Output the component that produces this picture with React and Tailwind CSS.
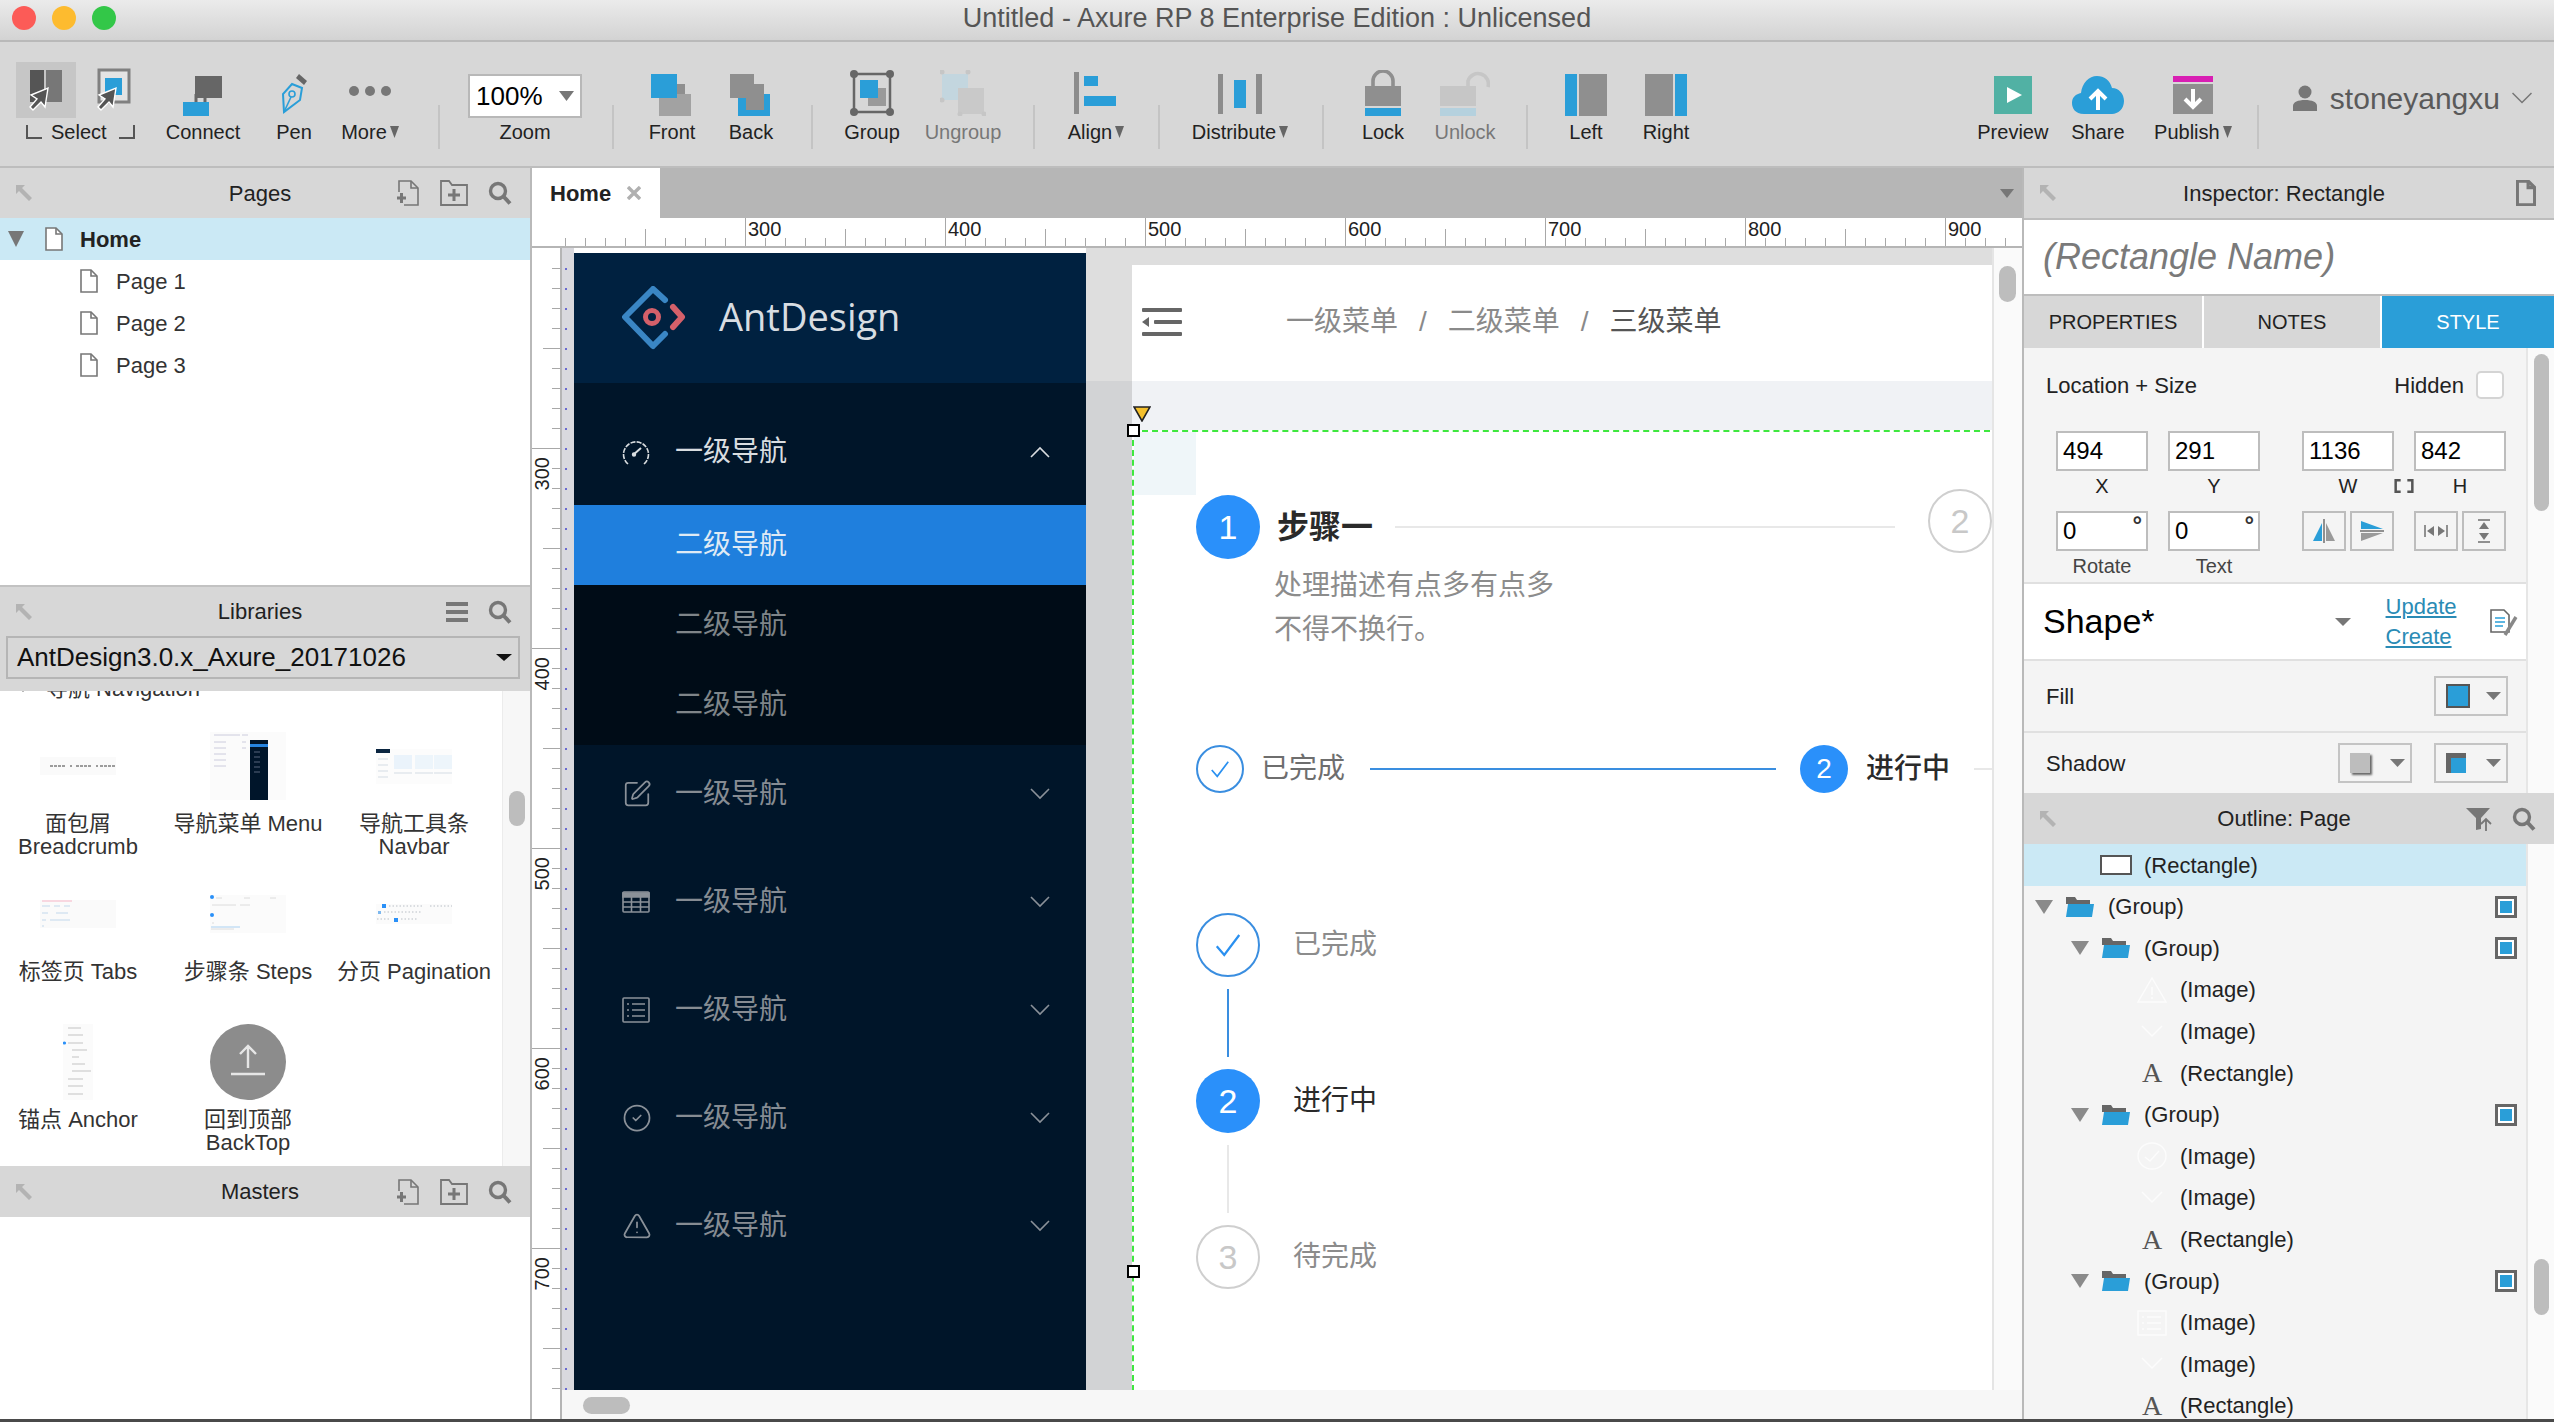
import { SquarePen, CircleCheck, TriangleAlert } from "lucide-react";

const BLUE = "#2a9ed8";

// ---- small drawn icons ----

function Tri({ w = 16, h = 10, color = "#777", className = "" }) {
  return (
    <svg width={w} height={h} viewBox="0 0 16 10" preserveAspectRatio="none" className={className}>
      <path d="M0 0H16L8 10Z" fill={color} />
    </svg>
  );
}

function Chevron({ up, color = "#8a9199" }) {
  return (
    <svg width="20" height="12" viewBox="0 0 20 12" fill="none" stroke={color} strokeWidth="1.6">
      <path d={up ? "M1 11L10 2L19 11" : "M1 1L10 10L19 1"} />
    </svg>
  );
}

function CollapseArrow() {
  return (
    <svg width="18" height="16" viewBox="0 0 18 16" fill="#b3b3b3">
      <path d="M1 0H10L7 3L17 13L14 16L4 6L1 9Z" />
    </svg>
  );
}

function Search({ size = 24 }) {
  return (
    <svg width={size} height={size} viewBox="0 0 24 24" fill="none" stroke="#777">
      <circle cx="10" cy="10" r="7.5" strokeWidth="3.4" />
      <path d="M15.5 15.5L22 22.5" strokeWidth="4" />
    </svg>
  );
}

function Doc({ w = 18, h = 24, color = "#777", fill = "#fff", sw = 1.6 }) {
  return (
    <svg width={w} height={h} viewBox="0 0 18 24" fill={fill} stroke={color} strokeWidth={sw}>
      <path d="M1 1H11L17 7V23H1Z" />
      <path d="M11 1V7H17" fill="none" />
    </svg>
  );
}

function AddPage() {
  return (
    <svg width="24" height="26" viewBox="0 0 24 26" fill="none" stroke="#777" strokeWidth="1.6">
      <path d="M3 12V1H15L22 8V25H8" />
      <path d="M15 1V8H22" />
      <path d="M1 18H10M5.5 13V23" strokeWidth="3" />
    </svg>
  );
}

function AddFolder() {
  return (
    <svg width="28" height="26" viewBox="0 0 28 26" fill="none" stroke="#777" strokeWidth="1.8">
      <path d="M1 25V1H9L12 5H27V25Z" />
      <path d="M8 15H20M14 9V21" strokeWidth="3" />
    </svg>
  );
}

function Cursor({ x, y }) {
  return (
    <path
      transform={`translate(${x} ${y})`}
      d="M20 0L17 19L13 14L5 22L2 19L9 11L3 7Z"
      fill="#555"
      stroke="#fff"
      strokeWidth="1.4"
    />
  );
}

function SelectIconA() {
  return (
    <svg width="36" height="44" viewBox="0 0 36 44">
      <rect x="2" y="2" width="14" height="32" fill="#555" />
      <rect x="18" y="2" width="16" height="32" fill="#777" />
      <Cursor x="0" y="20" />
    </svg>
  );
}

function SelectIconB() {
  return (
    <svg width="36" height="44" viewBox="0 0 36 44">
      <rect x="3" y="2" width="30" height="32" fill="#e4e4e4" stroke="#808080" strokeWidth="3" />
      <rect x="9" y="10" width="17" height="17" fill={BLUE} />
      <Cursor x="0" y="20" />
    </svg>
  );
}

const ICONS = {
  connect: (
    <svg width="40" height="46" viewBox="0 0 40 46">
      <rect x="12" y="6" width="27" height="22" fill="#666" />
      <path d="M22 28V34H13V24" fill="none" stroke="#666" strokeWidth="3" />
      <rect x="0" y="30" width="26" height="16" fill={BLUE} transform="translate(0 -6)" opacity="0" />
      <rect x="0" y="32" width="26" height="14" fill={BLUE} />
    </svg>
  ),
  pen: (
    <svg width="30" height="46" viewBox="0 0 30 46" fill="none">
      <path d="M20 4L28 11L25 15L17 8Z" fill="#666" />
      <path d="M13 14L23 18L21 30L5 42L4 24Z" stroke={BLUE} strokeWidth="2" fill="none" />
      <circle cx="13" cy="24" r="3" stroke={BLUE} strokeWidth="1.6" />
      <path d="M5 42L12 27" stroke={BLUE} strokeWidth="1.6" />
    </svg>
  ),
  more: (
    <svg width="42" height="46" viewBox="0 0 42 46" fill="#777">
      <ellipse cx="5" cy="21" rx="5" ry="5" />
      <ellipse cx="21" cy="21" rx="5" ry="5" />
      <ellipse cx="37" cy="21" rx="5" ry="5" />
    </svg>
  ),
  front: (
    <svg width="42" height="46" viewBox="0 0 42 46">
      <path d="M18 20H34V34H26V46H8V36H18Z" fill="#9a9a9a" />
      <rect x="16" y="14" width="18" height="26" fill="#8f8f8f" />
      <rect x="8" y="24" width="32" height="22" fill="#a2a2a2" />
      <rect x="0" y="4" width="26" height="24" fill={BLUE} />
    </svg>
  ),
  back: (
    <svg width="42" height="46" viewBox="0 0 42 46">
      <rect x="8" y="24" width="32" height="22" fill={BLUE} />
      <rect x="16" y="14" width="18" height="26" fill="#8f8f8f" />
      <rect x="0" y="4" width="24" height="24" fill="#8f8f8f" />
    </svg>
  ),
  group: (
    <svg width="44" height="46" viewBox="0 0 44 46">
      <rect x="4" y="4" width="36" height="38" fill="none" stroke="#666" strokeWidth="2.5" />
      <ellipse cx="4" cy="4" rx="4" ry="4" fill="#666" />
      <ellipse cx="40" cy="4" rx="4" ry="4" fill="#666" />
      <ellipse cx="4" cy="42" rx="4" ry="4" fill="#666" />
      <ellipse cx="40" cy="42" rx="4" ry="4" fill="#666" />
      <rect x="18" y="18" width="18" height="18" fill="#9a9a9a" />
      <rect x="10" y="10" width="18" height="18" fill={BLUE} />
    </svg>
  ),
  ungroup: (
    <svg width="46" height="46" viewBox="0 0 46 46">
      <rect x="2" y="4" width="26" height="26" fill="#c3d6df" />
      <rect x="18" y="18" width="26" height="26" fill="#c9c9c9" />
      <g fill="#c6c6c6">
        <circle cx="2" cy="2" r="2.5" />
        <circle cx="28" cy="2" r="2.5" />
        <circle cx="2" cy="30" r="2.5" />
        <circle cx="44" cy="44" r="2.5" />
        <circle cx="20" cy="44" r="2.5" />
      </g>
    </svg>
  ),
  align: (
    <svg width="44" height="46" viewBox="0 0 44 46">
      <rect x="0" y="2" width="5" height="42" fill="#8c8c8c" />
      <rect x="10" y="6" width="14" height="10" fill={BLUE} />
      <rect x="10" y="26" width="32" height="10" fill={BLUE} />
    </svg>
  ),
  distribute: (
    <svg width="44" height="46" viewBox="0 0 44 46">
      <rect x="0" y="4" width="5" height="40" fill="#8c8c8c" />
      <rect x="16" y="10" width="12" height="28" fill={BLUE} />
      <rect x="38" y="4" width="6" height="40" fill="#8c8c8c" />
    </svg>
  ),
  lock: (
    <svg width="36" height="46" viewBox="0 0 36 46">
      <path d="M8 18V11A10 10 0 0 1 28 11V18" fill="none" stroke="#8f8f8f" strokeWidth="3.6" />
      <rect x="0" y="16" width="36" height="20" fill="#8f8f8f" />
      <rect x="0" y="38" width="36" height="8" fill={BLUE} />
    </svg>
  ),
  unlock: (
    <svg width="50" height="46" viewBox="0 0 50 46">
      <path d="M28 18V11A10 10 0 0 1 48 17" fill="none" stroke="#c6c6c6" strokeWidth="3.6" />
      <rect x="0" y="16" width="36" height="20" fill="#c6c6c6" />
      <rect x="0" y="38" width="36" height="8" fill="#b5d1de" />
    </svg>
  ),
  left: (
    <svg width="42" height="46" viewBox="0 0 42 46">
      <rect x="0" y="4" width="12" height="42" fill={BLUE} />
      <rect x="14" y="4" width="28" height="42" fill="#8f8f8f" />
    </svg>
  ),
  right: (
    <svg width="42" height="46" viewBox="0 0 42 46">
      <rect x="0" y="4" width="28" height="42" fill="#8f8f8f" />
      <rect x="30" y="4" width="12" height="42" fill={BLUE} />
    </svg>
  ),
  preview: (
    <svg width="40" height="46" viewBox="0 0 40 46">
      <rect x="1" y="6" width="38" height="38" fill="#51b1a4" />
      <path d="M14 17L29 25L14 33Z" fill="#fff" />
    </svg>
  ),
  share: (
    <svg width="54" height="46" viewBox="0 0 54 46">
      <path
        d="M13 44C4 44 1 38 1 33C1 27 5 24 10 23C11 13 18 6 26 6C33 6 39 10 41 18C48 18 53 24 53 31C53 39 47 44 41 44Z"
        fill={BLUE}
      />
      <path d="M27 40V22M19 29L27 21L35 29" fill="none" stroke="#fff" strokeWidth="4" />
    </svg>
  ),
  publish: (
    <svg width="40" height="46" viewBox="0 0 40 46">
      <rect x="0" y="6" width="40" height="6" fill="#d81fb3" />
      <rect x="0" y="14" width="40" height="30" fill="#8f8f8f" />
      <path d="M20 19V37M12 29L20 37L28 29" fill="none" stroke="#fff" strokeWidth="4" />
    </svg>
  ),
};

// ---- toolbar ----

const LEFT_TOOLS = [
  { icon: "connect", label: "Connect", w: "w-[126px]" },
  { icon: "pen", label: "Pen", w: "w-[56px]" },
  { icon: "more", label: "More", w: "w-[96px]", drop: true },
  { divider: "ml-[20px]" },
  { zoom: true },
  { divider: "ml-[2px]" },
  { icon: "front", label: "Front", w: "w-[116px]" },
  { icon: "back", label: "Back", w: "w-[42px]" },
  { divider: "ml-[39px]" },
  { icon: "group", label: "Group", w: "w-[118px]" },
  { icon: "ungroup", label: "Ungroup", w: "w-[64px]", muted: true },
  { divider: "ml-[38px]" },
  { icon: "align", label: "Align", w: "w-[122px]", drop: true },
  { divider: "ml-[1px]" },
  { icon: "distribute", label: "Distribute", w: "w-[160px]", drop: true },
  { divider: "ml-[2px]" },
  { icon: "lock", label: "Lock", w: "w-[118px]" },
  { icon: "unlock", label: "Unlock", w: "w-[46px]", muted: true },
  { divider: "ml-[38px]" },
  { icon: "left", label: "Left", w: "w-[116px]" },
  { icon: "right", label: "Right", w: "w-[44px]" },
];

function Divider({ className }) {
  return <div className={`w-[2px] h-[44px] mt-[35px] bg-[#c4c4c4] shrink-0 ${className}`} />;
}

function Tool({ tool }) {
  return (
    <div className={`${tool.w} shrink-0 flex flex-col items-center`}>
      <div className="h-[46px] flex items-start justify-center">{ICONS[tool.icon]}</div>
      <div
        className={`h-[24px] mt-[4px] flex items-center gap-[3px] text-[20px] whitespace-nowrap ${
          tool.muted ? "text-[#777]" : "text-[#222]"
        }`}
      >
        {tool.label}
        {tool.drop && <Tri w={9} h={12} color="#666" />}
      </div>
    </div>
  );
}

function Toolbar() {
  return (
    <div className="h-[124px] bg-[#d7d7d7] flex items-start pt-[28px] pl-[16px] shrink-0">
      <div className="w-[124px] shrink-0 flex flex-col">
        <div className="flex items-center -mt-[8px]">
          <div className="w-[60px] h-[56px] bg-[#c6c6c6] flex items-center justify-center">
            <SelectIconA />
          </div>
          <div className="ml-[20px]">
            <SelectIconB />
          </div>
        </div>
        <div className="h-[24px] mt-[2px] flex items-center text-[20px] text-[#222] whitespace-nowrap pl-[10px]">
          <div className="w-[16px] h-[14px] border-l-2 border-b-2 border-[#555] mr-[9px]" />
          Select
          <div className="w-[16px] h-[14px] border-r-2 border-b-2 border-[#555] ml-[12px]" />
        </div>
      </div>
      {LEFT_TOOLS.map((t, i) => {
        if (t.divider) return <Divider key={i} className={`-mt-[-7px] ${t.divider}`} />;
        if (t.zoom)
          return (
            <div key={i} className="w-[170px] shrink-0 flex flex-col items-center">
              <div className="w-[114px] h-[44px] mt-[4px] -mb-[2px] bg-white border-2 border-[#b8b8b8] flex items-center justify-between pl-[6px] pr-[6px] text-[26px] text-black">
                100%
                <Tri w={15} h={10} color="#777" />
              </div>
              <div className="h-[24px] mt-[4px] flex items-center text-[20px] text-[#222]">Zoom</div>
            </div>
          );
        return <Tool key={i} tool={t} />;
      })}
      <div className="flex-1" />
      <Tool tool={{ icon: "preview", label: "Preview", w: "w-[80px]" }} />
      <Tool tool={{ icon: "share", label: "Share", w: "w-[90px]" }} />
      <Tool tool={{ icon: "publish", label: "Publish", w: "w-[100px]", drop: true }} />
      <Divider className="ml-[14px]" />
      <div className="flex items-center ml-[34px] h-[48px] pt-[8px] mr-[22px]">
        <svg width="24" height="26" viewBox="0 0 24 26" fill="#777">
          <circle cx="12" cy="7" r="6.5" />
          <path d="M0 26V21C0 17 5 15 12 15C19 15 24 17 24 21V26Z" />
        </svg>
        <span className="text-[30px] text-[#5a5a5a] ml-[13px] mr-[12px]">stoneyangxu</span>
        <svg width="20" height="12" viewBox="0 0 20 12" fill="none" stroke="#777" strokeWidth="1.5">
          <path d="M0.5 1L10 10.5L19.5 1" />
        </svg>
      </div>
    </div>
  );
}

// ---- shared panel pieces ----

function PanelHeader({ title, children, className = "h-[50px]" }) {
  return (
    <div className={`bg-[#d7d7d7] grid grid-cols-[130px_1fr_140px] items-center shrink-0 ${className}`}>
      <div className="pl-[15px] flex">
        <CollapseArrow />
      </div>
      <div className="text-center text-[22px] text-[#222]">{title}</div>
      <div className="flex items-center justify-end gap-[20px] pr-[18px]">{children}</div>
    </div>
  );
}

function PageRow({ label }) {
  return (
    <div className="h-[42px] flex items-center pl-[80px] text-[22px] text-[#333]">
      <Doc />
      <span className="ml-[18px]">{label}</span>
    </div>
  );
}

// little library previews, drawn as pictures
const THUMBS = {
  breadcrumb: (
    <svg width="76" height="18" viewBox="0 0 76 18">
      <rect width="76" height="18" fill="#fafafa" />
      <path d="M10 9H26M30 9H32M36 9H52M56 9H58M60 9H76" stroke="#9c9c9c" strokeWidth="2" strokeDasharray="3 1" />
    </svg>
  ),
  menu: (
    <svg width="76" height="68" viewBox="0 0 76 68">
      <rect width="76" height="68" fill="#fbfbfb" />
      <rect x="40" y="8" width="18" height="60" fill="#00152a" />
      <rect x="40" y="12" width="18" height="3" fill="#2684e0" />
      <path d="M4 3H30M4 10H16M4 16H16M4 22H16M4 28H16M4 34H16M32 3H38M32 10H36M32 16H36" stroke="#ccd" strokeWidth="1" />
      <path d="M44 20H50M44 25H50M44 30H50M44 35H50M44 40H50" stroke="#56657a" strokeWidth="1" />
    </svg>
  ),
  navbar: (
    <svg width="76" height="35" viewBox="0 0 76 35">
      <rect width="76" height="35" fill="#fcfcfc" />
      <rect width="14" height="4" fill="#0a2540" />
      <rect x="18" y="6" width="18" height="14" fill="#eaf3fb" />
      <rect x="39" y="6" width="18" height="14" fill="#edf5fb" />
      <rect x="58" y="6" width="18" height="14" fill="#edf5fb" />
      <path d="M2 10H12M2 16H12M2 22H12M2 28H12M18 24H36M39 24H57M58 24H76" stroke="#d4dce4" strokeWidth="1" />
    </svg>
  ),
  tabs: (
    <svg width="76" height="28" viewBox="0 0 76 28">
      <rect width="76" height="28" fill="#fafafa" />
      <path d="M2 1H32" stroke="#f6c8d4" strokeWidth="1.4" />
      <path d="M2 6H10M14 6H20M24 6H30M2 13H8M16 13H28M2 20H6M10 20H30M2 26H4" stroke="#d5e3f1" strokeWidth="1.4" />
    </svg>
  ),
  steps: (
    <svg width="76" height="38" viewBox="0 0 76 38">
      <rect width="76" height="38" fill="#fbfbfb" />
      <circle cx="2" cy="2" r="2" fill="#2a90f8" />
      <circle cx="2" cy="20" r="2" fill="#2a90f8" />
      <path d="M6 3H12M34 3H40M60 3H66M2 10H26M30 10H40M2 28H4M1 34H24" stroke="#dcdcdc" strokeWidth="1" />
      <path d="M1 32H30" stroke="#a9d0f1" strokeWidth="1" />
    </svg>
  ),
  pagination: (
    <svg width="76" height="20" viewBox="0 0 76 20">
      <rect width="76" height="20" fill="#fbfbfb" />
      <rect x="6" y="0" width="4" height="4" fill="#2a90f8" />
      <rect x="2" y="7" width="3" height="3" fill="#7db8ef" />
      <rect x="18" y="14" width="4" height="4" fill="#2a90f8" />
      <path d="M13 2H48M54 2H76M8 8H46M1 15H14M25 15H42" stroke="#b9bfc6" strokeWidth="1" strokeDasharray="1.5 2" />
    </svg>
  ),
  anchor: (
    <svg width="30" height="76" viewBox="0 0 30 76">
      <rect width="30" height="76" fill="#fbfbfb" />
      <circle cx="1.5" cy="19" r="1.6" fill="#2a90f8" />
      <path d="M5 4H18M5 11H20M5 19H20M9 26H24M9 33H16M9 40H22M9 47H28M5 55H20M5 62H20M5 70H20" stroke="#c4c4c4" strokeWidth="1.2" />
    </svg>
  ),
  backtop: (
    <svg width="76" height="76" viewBox="0 0 76 76">
      <circle cx="38" cy="38" r="38" fill="#8c8c8c" />
      <path d="M38 44V22M30 30L38 22L46 30M21 50H55" fill="none" stroke="#e6e6e6" strokeWidth="2.4" />
    </svg>
  ),
};

const LIBRARY = [
  { thumb: "breadcrumb", lines: ["面包屑", "Breadcrumb"] },
  { thumb: "menu", lines: ["导航菜单 Menu"] },
  { thumb: "navbar", lines: ["导航工具条", "Navbar"] },
  { thumb: "tabs", lines: ["标签页 Tabs"] },
  { thumb: "steps", lines: ["步骤条 Steps"] },
  { thumb: "pagination", lines: ["分页 Pagination"] },
  { thumb: "anchor", lines: ["锚点 Anchor"] },
  { thumb: "backtop", lines: ["回到顶部", "BackTop"] },
];

function LeftPanel() {
  return (
    <div className="w-[532px] shrink-0 border-r-2 border-[#b9b9b9] flex flex-col bg-white">
      <PanelHeader title="Pages">
        <div className="flex items-center gap-[20px] mr-[0px]">
          <AddPage />
          <AddFolder />
          <Search />
        </div>
      </PanelHeader>
      <div className="h-[367px] shrink-0">
        <div className="h-[42px] bg-[#cbe9f5] flex items-center pl-[8px] text-[22px] font-bold text-[#222]">
          <Tri w={16} h={16} color="#777" />
          <span className="ml-[21px] flex">
            <Doc />
          </span>
          <span className="ml-[17px]">Home</span>
        </div>
        <PageRow label="Page 1" />
        <PageRow label="Page 2" />
        <PageRow label="Page 3" />
      </div>
      <div className="h-[2px] bg-[#c2c2c2] shrink-0" />
      <div className="h-[104px] bg-[#d7d7d7] shrink-0 flex flex-col">
        <PanelHeader title="Libraries" className="h-[49px]">
          <div className="flex items-center gap-[20px]">
            <svg width="22" height="20" viewBox="0 0 22 20" fill="#777">
              <rect width="22" height="4" />
              <rect y="8" width="22" height="4" />
              <rect y="16" width="22" height="4" />
            </svg>
            <Search />
          </div>
        </PanelHeader>
        <div className="h-[43px] mx-[6px] w-[514px] border-2 border-[#b5b5b5] flex items-center justify-between pl-[9px] pr-[6px] text-[26px] text-[#111]">
          AntDesign3.0.x_Axure_20171026
          <Tri w={16} h={7} color="#111" />
        </div>
      </div>
      <div className="h-[475px] shrink-0 flex overflow-hidden">
        <div className="flex-1 overflow-hidden">
          <div className="h-[23px] -mt-[14px] flex items-center pl-[18px] text-[22px] text-[#333]">
            <Tri w={10} h={6} color="#555" />
            <span className="ml-[18px] whitespace-nowrap">导航 Navigation</span>
          </div>
          <div className="mt-[26px] grid grid-cols-[156px_184px_148px] gap-y-[16px] text-[22px] leading-[23px] text-[#333]">
            {LIBRARY.map((item) => (
              <div key={item.thumb} className="flex flex-col items-center">
                <div className="h-[80px] flex items-center justify-center">{THUMBS[item.thumb]}</div>
                <div className="mt-[6px] h-[46px] flex flex-col items-center whitespace-nowrap">
                  {item.lines.map((l) => (
                    <span key={l}>{l}</span>
                  ))}
                </div>
              </div>
            ))}
          </div>
        </div>
        <div className="w-[28px] bg-[#f7f7f7] border-l border-[#ececec] pt-[100px] pl-[6px] shrink-0">
          <div className="w-[16px] h-[35px] rounded-full bg-[#bdbdbd]" />
        </div>
      </div>
      <PanelHeader title="Masters" className="h-[51px]">
        <div className="flex items-center gap-[20px]">
          <AddPage />
          <AddFolder />
          <Search />
        </div>
      </PanelHeader>
    </div>
  );
}

// ---- canvas ----

function HorizontalRuler() {
  const ticks = Array.from({ length: 73 }, (_, i) => i);
  return (
    <div className="h-[30px] bg-white flex pl-[33px] border-b-2 border-[#b5b5b5] shrink-0 overflow-hidden">
      {ticks.map((i) => {
        const major = i % 10 === 9;
        const mid = i % 10 === 4;
        return (
          <div key={i} className="relative w-[20px] shrink-0 flex flex-col justify-end">
            <div className={`w-[1px] bg-[#a8a8a8] ${major ? "h-[29px]" : mid ? "h-[17px]" : "h-[8px]"}`} />
            {major && (
              <span className="absolute left-[3px] top-0 text-[20px] leading-[22px] text-[#222]">
                {300 + (i - 9) * 10}
              </span>
            )}
          </div>
        );
      })}
    </div>
  );
}

function VerticalRuler() {
  const ticks = Array.from({ length: 57 }, (_, i) => i);
  return (
    <div className="w-[30px] h-full bg-white border-r-2 border-[#b5b5b5] shrink-0 pt-[20px] overflow-hidden">
      {ticks.map((i) => {
        const major = i % 10 === 9;
        const mid = i % 10 === 4;
        return (
          <div key={i} className="relative h-[20px] flex justify-end">
            <div className={`h-[1px] bg-[#a8a8a8] ${major ? "w-[29px]" : mid ? "w-[17px]" : "w-[8px]"}`} />
            {major && (
              <span className="absolute left-[-1px] top-[9px] text-[20px] leading-[22px] text-[#222] [writing-mode:vertical-rl] rotate-180">
                {300 + (i - 9) * 10}
              </span>
            )}
          </div>
        );
      })}
    </div>
  );
}

function GuideStrip() {
  const dots = Array.from({ length: 57 }, (_, i) => i);
  return (
    <div className="w-[12px] h-full bg-[#d9d9de] shrink-0 pt-[20px] overflow-hidden">
      {dots.map((i) => (
        <div key={i} className="h-[20px]">
          <div className="w-[2px] h-[2px] ml-[3px] bg-[#6a6ad0]" />
        </div>
      ))}
    </div>
  );
}

function GaugeIcon({ color }) {
  return (
    <svg width="28" height="28" viewBox="0 0 28 28" fill="none" stroke={color} strokeWidth="1.6">
      <path d="M6 26A12.5 12.5 0 1 1 22 26" strokeDasharray="5 1.2" />
      <path d="M11 17L19 10" strokeWidth="2" />
      <circle cx="12" cy="16.5" r="1.4" fill={color} />
    </svg>
  );
}

function TableIcon({ color }) {
  return (
    <svg width="28" height="22" viewBox="0 0 28 22" fill="none" stroke={color} strokeWidth="1.6">
      <rect x="1" y="1" width="26" height="20" rx="1" />
      <path d="M1 2H27V6H1Z" fill={color} />
      <path d="M1 11H27M1 16H27M9.5 6V21M18.5 6V21" />
    </svg>
  );
}

function ListIcon({ color }) {
  return (
    <svg width="28" height="26" viewBox="0 0 28 26" fill="none" stroke={color} strokeWidth="1.6">
      <rect x="1" y="1" width="26" height="24" rx="1" />
      <path d="M10 7H23M10 13H23M10 19H23M5 7H7M5 13H7M5 19H7" />
    </svg>
  );
}

const NAV_MUTED = "#8a9199";

const NAV_ITEMS = [
  <SquarePen key="a" size={30} strokeWidth={1.4} color={NAV_MUTED} />,
  <TableIcon key="b" color={NAV_MUTED} />,
  <ListIcon key="c" color={NAV_MUTED} />,
  <CircleCheck key="d" size={30} strokeWidth={1.4} color={NAV_MUTED} />,
  <TriangleAlert key="e" size={30} strokeWidth={1.4} color={NAV_MUTED} />,
];

function Nav() {
  return (
    <div className="w-[512px] shrink-0 flex flex-col mt-[5px] h-[1137px] bg-[#001529]">
      <div className="h-[130px] bg-[#002140] flex items-center pl-[48px] shrink-0">
        <svg width="64" height="64" viewBox="0 0 64 64" fill="none" strokeWidth="6" strokeLinecap="round" strokeLinejoin="round">
          <path d="M43 14L31 3L3 31L31 60L43 48" stroke="#3a86c4" />
          <circle cx="30" cy="31" r="6.5" stroke="#d4606a" strokeWidth="5" />
          <path d="M51 21L60 31L51 41" stroke="#d4606a" />
        </svg>
        <span className="ml-[33px] text-[38px] font-medium text-[#d8dde2] [font-family:'Open_Sans',sans-serif] -mt-[4px]">
          AntDesign
        </span>
      </div>
      <div className="h-[122px] pt-[16px] flex items-center pl-[48px] pr-[36px] shrink-0">
        <span className="w-[53px] flex">
          <GaugeIcon color="#d9dde0" />
        </span>
        <span className="flex-1 text-[28px] text-[#d9dde0]">一级导航</span>
        <Chevron up color="#d9dde0" />
      </div>
      <div className="h-[80px] bg-[#1f7fdd] flex items-center pl-[101px] text-[28px] text-[#dfeaf5] shrink-0">二级导航</div>
      <div className="h-[80px] bg-[#000c17] flex items-center pl-[101px] text-[28px] text-[#7f8589] shrink-0">二级导航</div>
      <div className="h-[80px] bg-[#000c17] flex items-center pl-[101px] text-[28px] text-[#7f8589] shrink-0">二级导航</div>
      <div className="flex flex-col gap-[10px]">
        {NAV_ITEMS.map((icon, i) => (
          <div key={i} className="h-[98px] flex items-center pl-[48px] pr-[36px]">
            <span className="w-[53px] flex">{icon}</span>
            <span className="flex-1 text-[28px] text-[#868c93]">一级导航</span>
            <Chevron />
          </div>
        ))}
      </div>
    </div>
  );
}

function StepCircle({ n, state, size = "w-[64px] h-[64px]", text = "text-[34px]" }) {
  if (state === "done")
    return (
      <div className={`${size} shrink-0 rounded-full border-2 border-[#3a8ee0] flex items-center justify-center`}>
        <svg width="50%" height="50%" viewBox="0 0 24 24" fill="none" stroke="#2a90f0" strokeWidth="1.8">
          <path d="M3 13L9 20L21 4" />
        </svg>
      </div>
    );
  if (state === "active")
    return (
      <div className={`${size} shrink-0 rounded-full bg-[#2a90fa] text-white flex items-center justify-center ${text}`}>
        {n}
      </div>
    );
  return (
    <div className={`${size} shrink-0 rounded-full border-2 border-[#cfcfcf] text-[#c8c8c8] flex items-center justify-center ${text}`}>
      {n}
    </div>
  );
}

function Page() {
  return (
    <div className="w-[860px] shrink-0 flex flex-col h-[1143px]">
      <div className="h-[17px] bg-[#dedede] shrink-0" />
      <div className="h-[116px] bg-white flex items-center shrink-0 pl-[10px] pb-[2px]">
        <svg width="40" height="28" viewBox="0 0 40 28" fill="#666">
          <rect width="40" height="4" rx="1" />
          <rect x="12" y="12" width="28" height="4" rx="1" />
          <rect y="24" width="40" height="4" rx="1" />
          <path d="M0 14L7 9V19Z" />
        </svg>
        <div className="ml-[104px] flex items-center text-[28px] text-[#8a8a8a] whitespace-nowrap">
          一级菜单
          <span className="mx-[21px]">/</span>
          二级菜单
          <span className="mx-[21px]">/</span>
          <span className="text-[#555]">三级菜单</span>
        </div>
      </div>
      <div className="h-[49px] bg-[#f0f2f5] shrink-0" />
      <div className="relative flex-1 bg-white overflow-hidden pl-[64px] pt-[59px]">
        {/* selected rectangle's handles and outline lie over the page */}
        <div className="absolute left-[2px] top-[2px] w-[62px] h-[63px] bg-[#eff6f9]" />
        <div className="absolute left-0 right-[2px] top-0 border-t-2 border-dashed border-[#3fe83f]" />
        <div className="absolute left-0 top-0 bottom-0 border-l-2 border-dashed border-[#3fe83f]" />

        <div className="relative flex items-center">
          <StepCircle n="1" state="active" />
          <span className="ml-[17px] w-[129px] text-[32px] font-bold text-[#2a2a2a] whitespace-nowrap leading-none">步骤一</span>
          <div className="w-[500px] h-[2px] bg-[#e8e8e8] shrink-0" />
          <div className="ml-[33px] mb-[12px]">
            <StepCircle n="2" state="todo" />
          </div>
        </div>
        <div className="ml-[78px] -mt-[1px] text-[28px] leading-[44px] text-[#8c8c8c]">
          <div>处理描述有点多有点多</div>
          <div>不得不换行。</div>
        </div>

        <div className="mt-[93px] flex items-center">
          <StepCircle state="done" size="w-[48px] h-[48px]" />
          <span className="ml-[17px] w-[84px] text-[28px] text-[#6e6e6e] whitespace-nowrap">已完成</span>
          <div className="ml-[25px] w-[406px] h-[2px] bg-[#3a8ee0] shrink-0" />
          <div className="ml-[24px]">
            <StepCircle n="2" state="active" size="w-[48px] h-[48px]" text="text-[28px]" />
          </div>
          <span className="ml-[18px] w-[84px] text-[28px] font-medium text-[#2a2a2a] whitespace-nowrap">进行中</span>
          <div className="ml-[24px] w-[20px] h-[2px] bg-[#e8e8e8] shrink-0" />
        </div>

        <div className="mt-[120px] flex items-center">
          <StepCircle state="done" />
          <span className="ml-[33px] text-[28px] text-[#8c8c8c]">已完成</span>
        </div>
        <div className="ml-[31px] my-[12px] w-[2px] h-[68px] bg-[#3a8ee0]" />
        <div className="flex items-center">
          <StepCircle n="2" state="active" />
          <span className="ml-[33px] text-[28px] text-[#2a2a2a]">进行中</span>
        </div>
        <div className="ml-[31px] my-[12px] w-[2px] h-[68px] bg-[#e8e8e8]" />
        <div className="flex items-center">
          <StepCircle n="3" state="todo" />
          <span className="ml-[33px] text-[28px] text-[#8c8c8c]">待完成</span>
        </div>
      </div>
    </div>
  );
}

function Handle({ className }) {
  return <div className={`absolute w-[13px] h-[13px] bg-white border-2 border-black ${className}`} />;
}

function Canvas() {
  return (
    <div className="w-[1490px] shrink-0 flex flex-col">
      <div className="h-[50px] bg-[#b6b6b6] flex items-stretch shrink-0">
        <div className="w-[128px] bg-white flex items-center pl-[18px] text-[22px] font-bold text-[#222]">
          Home
          <svg width="14" height="14" viewBox="0 0 14 14" stroke="#b0b0b0" strokeWidth="3.4" className="ml-[16px]">
            <path d="M1 1L13 13M13 1L1 13" />
          </svg>
        </div>
        <div className="flex-1" />
        <div className="flex items-center pr-[8px]">
          <Tri w={14} h={9} color="#777" />
        </div>
      </div>
      <HorizontalRuler />
      <div className="relative flex-1 flex overflow-hidden">
        <VerticalRuler />
        <GuideStrip />
        <Nav />
        <div className="w-[46px] shrink-0 flex flex-col h-[1143px]">
          <div className="h-[133px] bg-[#dedede]" />
          <div className="flex-1 bg-[#d2d3d5]" />
        </div>
        <Page />
        <div className="w-[30px] shrink-0 h-[1143px] bg-[#fafafa] border-l-2 border-[#e5e5e5] pt-[18px] pl-[5px]">
          <div className="w-[17px] h-[36px] rounded-full bg-[#bdbdbd]" />
        </div>
        {/* over the canvas: handles, marker and bottom scroll bar */}
        <Handle className="left-[595px] top-[176px]" />
        <Handle className="left-[595px] top-[1017px]" />
        <svg width="18" height="16" viewBox="0 0 18 16" className="absolute left-[601px] top-[158px]">
          <path d="M1 1H17L9 15Z" fill="#f5c02c" stroke="#222" strokeWidth="1.6" />
        </svg>
        <div className="absolute left-[30px] right-0 bottom-0 h-[32px] bg-[#f7f7f7] pt-[7px] pl-[21px]">
          <div className="w-[47px] h-[17px] rounded-full bg-[#bdbdbd]" />
        </div>
      </div>
    </div>
  );
}

// ---- inspector ----

function Field({ value, deg, className = "" }) {
  return (
    <div className={`relative w-[92px] h-[40px] bg-white border-2 border-[#bdbdbd] flex items-center pl-[5px] text-[24px] text-black ${className}`}>
      {value}
      {deg && <span className="absolute right-[4px] top-[-6px] text-[24px] font-bold text-[#333]">°</span>}
    </div>
  );
}

function IconBtn({ children }) {
  return (
    <div className="w-[44px] h-[40px] border-2 border-[#bdbdbd] flex items-center justify-center">{children}</div>
  );
}

function DropBox({ children, className = "" }) {
  return (
    <div className={`w-[74px] h-[40px] border-2 border-[#c4c4c4] flex items-center justify-between pl-[10px] pr-[5px] ${className}`}>
      {children}
      <Tri w={15} h={8} color="#777" />
    </div>
  );
}

function StyleSection() {
  return (
    <div className="h-[445px] shrink-0 flex bg-[#f4f4f4] overflow-hidden">
      <div className="w-[502px] shrink-0 flex flex-col">
        <div className="h-[236px] shrink-0 pl-[32px] pt-[22px] border-b-2 border-[#e0e0e0]">
          <div className="flex items-center h-[30px] text-[22px] text-[#222] pr-[22px] pl-[-10px] -ml-[10px]">
            Location + Size
            <span className="ml-auto mr-[12px]">Hidden</span>
            <div className="w-[28px] h-[28px] rounded-[5px] bg-white border-2 border-[#d4d4d4]" />
          </div>
          <div className="mt-[31px] flex gap-[20px]">
            <Field value="494" />
            <Field value="291" />
            <Field value="1136" className="ml-[22px]" />
            <Field value="842" />
          </div>
          <div className="mt-[3px] flex text-[20px] text-[#222] leading-[24px]">
            <span className="w-[92px] text-center">X</span>
            <span className="w-[92px] ml-[20px] text-center">Y</span>
            <span className="w-[92px] ml-[42px] text-center">W</span>
            <span className="w-[20px] flex items-center">
              <svg width="24" height="18" viewBox="0 0 24 18" fill="none" stroke="#555" strokeWidth="3">
                <path d="M8 2H2V16H8M16 2H22V16H16" />
              </svg>
            </span>
            <span className="w-[92px] text-center">H</span>
          </div>
          <div className="mt-[13px] flex gap-[20px]">
            <Field value="0" deg />
            <Field value="0" deg />
            <div className="ml-[22px] flex gap-[4px]">
              <IconBtn>
                <svg width="24" height="24" viewBox="0 0 24 24">
                  <path d="M10 4V22H1Z" fill={BLUE} />
                  <path d="M14 4V22H23Z" fill="#9a9a9a" />
                  <path d="M12 0V24" stroke="#666" strokeWidth="1.4" />
                </svg>
              </IconBtn>
              <IconBtn>
                <svg width="24" height="22" viewBox="0 0 24 22">
                  <path d="M1 1L23 9H1Z" fill={BLUE} />
                  <path d="M1 13H23L1 21Z" fill="#9a9a9a" />
                  <path d="M0 11H24" stroke="#666" strokeWidth="1.4" />
                </svg>
              </IconBtn>
            </div>
            <div className="flex gap-[4px]">
              <IconBtn>
                <svg width="24" height="12" viewBox="0 0 24 12" fill="#777">
                  <path d="M1 0V12" stroke="#777" strokeWidth="1.6" />
                  <path d="M3 6L10 1V11Z" />
                  <path d="M21 6L14 1V11Z" />
                  <path d="M23 0V12" stroke="#777" strokeWidth="1.6" />
                </svg>
              </IconBtn>
              <IconBtn>
                <svg width="12" height="24" viewBox="0 0 12 24" fill="#777">
                  <path d="M0 1H12" stroke="#777" strokeWidth="1.6" />
                  <path d="M6 3L1 10H11Z" />
                  <path d="M6 21L1 14H11Z" />
                  <path d="M0 23H12" stroke="#777" strokeWidth="1.6" />
                </svg>
              </IconBtn>
            </div>
          </div>
          <div className="mt-[3px] flex text-[20px] text-[#444] leading-[24px]">
            <span className="w-[92px] text-center">Rotate</span>
            <span className="w-[92px] ml-[20px] text-center">Text</span>
          </div>
        </div>
        <div className="h-[77px] shrink-0 bg-white border-b-2 border-[#e0e0e0] flex items-center pl-[19px] pr-[8px]">
          <span className="text-[34px] text-black">Shape*</span>
          <Tri w={16} h={8} color="#777" className="ml-[180px]" />
          <div className="ml-[35px] flex flex-col text-[22px] leading-[30px] text-[#2a8bb5] underline">
            <span>Update</span>
            <span>Create</span>
          </div>
          <svg width="28" height="28" viewBox="0 0 28 28" fill="none" className="ml-auto mt-[2px]">
            <path d="M1 1H14L19 6V23H1Z" fill="#fff" stroke="#666" strokeWidth="1.6" />
            <path d="M5 9H15M5 13H15M5 17H13" stroke={BLUE} strokeWidth="1.6" />
            <path d="M15 26L26 8" stroke="#888" strokeWidth="3.4" />
          </svg>
        </div>
        <div className="h-[72px] shrink-0 border-b-2 border-[#e0e0e0] flex items-center pl-[22px] pr-[18px] justify-between text-[22px] text-[#222]">
          Fill
          <DropBox>
            <div className="w-[24px] h-[24px] bg-[#2a9ed8] border-2 border-[#555]" />
          </DropBox>
        </div>
        <div className="flex-1 flex items-center pl-[22px] pr-[18px] text-[22px] text-[#222] pt-[0px]">
          Shadow
          <DropBox className="ml-auto">
            <div className="w-[20px] h-[20px] bg-[#bdbdbd] shadow-[2px_2px_2px_#666]" />
          </DropBox>
          <DropBox className="ml-[22px]">
            <div className="w-[20px] h-[20px] bg-[#2a9ed8] border-l-[5px] border-t-[5px] border-[#666]" />
          </DropBox>
        </div>
      </div>
      <div className="flex-1 bg-[#fafafa] border-l-2 border-[#e6e6e6] pt-[6px] pl-[6px]">
        <div className="w-[15px] h-[157px] rounded-full bg-[#bdbdbd]" />
      </div>
    </div>
  );
}

function Folder() {
  return (
    <svg width="28" height="20" viewBox="0 0 28 20" className="shrink-0">
      <path d="M0 0H9L11 3H24V7H0Z" fill="#666" />
      <path d="M2 7H28L26 20H0Z" fill={BLUE} />
    </svg>
  );
}

const FAINT = {
  warn: (
    <svg width="30" height="26" viewBox="0 0 30 26" fill="none" stroke="#fcfcfc" strokeWidth="1.4">
      <path d="M15 1L29 25H1Z" />
      <path d="M15 10V18M15 20V22" />
    </svg>
  ),
  down: (
    <svg width="30" height="16" viewBox="0 0 30 16" fill="none" stroke="#fcfcfc" strokeWidth="1.4">
      <path d="M5 2L15 12L25 2" />
    </svg>
  ),
  check: (
    <svg width="30" height="28" viewBox="0 0 30 28" fill="none" stroke="#fcfcfc" strokeWidth="1.4">
      <ellipse cx="15" cy="14" rx="14" ry="13" />
      <path d="M8 15L13 19L22 9" />
    </svg>
  ),
  list: (
    <svg width="30" height="26" viewBox="0 0 30 26" fill="none" stroke="#fcfcfc" strokeWidth="1.4">
      <rect x="1" y="1" width="28" height="24" />
      <path d="M10 7H24M10 13H24M10 19H24M5 7H7M5 13H7M5 19H7" />
    </svg>
  ),
};

const OUTLINE = [
  { kind: "group", depth: 0 },
  { kind: "group", depth: 1 },
  { kind: "image", icon: "warn" },
  { kind: "image", icon: "down" },
  { kind: "text" },
  { kind: "group", depth: 1 },
  { kind: "image", icon: "check" },
  { kind: "image", icon: "down" },
  { kind: "text" },
  { kind: "group", depth: 1 },
  { kind: "image", icon: "list" },
  { kind: "image", icon: "down" },
  { kind: "text" },
];

function OutlineRow({ row }) {
  if (row.kind === "group")
    return (
      <div className={`h-[41.6px] shrink-0 flex items-center pr-[9px] ${row.depth === 0 ? "pl-[11px]" : "pl-[47px]"}`}>
        <Tri w={18} h={14} color="#8a8a8a" className="shrink-0 mr-[13px]" />
        <Folder />
        <span className="ml-[14px]">(Group)</span>
        <div className="ml-auto w-[22px] h-[22px] border-[3px] border-[#666] bg-white flex items-center justify-center">
          <div className="w-[12px] h-[12px] bg-[#2a9ed8]" />
        </div>
      </div>
    );
  if (row.kind === "image")
    return (
      <div className="h-[41.6px] shrink-0 flex items-center pl-[113px]">
        <span className="w-[30px] flex justify-center shrink-0 mr-[13px]">{FAINT[row.icon]}</span>
        (Image)
      </div>
    );
  return (
    <div className="h-[41.6px] shrink-0 flex items-center pl-[113px]">
      <span className="w-[30px] shrink-0 mr-[13px] text-center text-[28px] leading-none text-[#555] [font-family:'Liberation_Serif',serif]">A</span>
      (Rectangle)
    </div>
  );
}

function RightPanel() {
  return (
    <div className="w-[532px] shrink-0 border-l-2 border-[#b9b9b9] flex flex-col">
      <PanelHeader title="Inspector: Rectangle">
        <Doc w={20} h={26} color="#777" fill="#d7d7d7" sw={3} />
      </PanelHeader>
      <div className="h-[78px] shrink-0 bg-white border-t-2 border-b-2 border-[#bdbdbd] flex items-center pl-[19px] text-[36px] italic text-[#7a7a7a] ">
        (Rectangle Name)
      </div>
      <div className="h-[52px] shrink-0 flex text-[20px]">
        <div className="w-[178px] bg-[#d7d7d7] flex items-center justify-center text-[#222]">PROPERTIES</div>
        <div className="w-[176px] ml-[2px] bg-[#d7d7d7] flex items-center justify-center text-[#222]">NOTES</div>
        <div className="flex-1 ml-[2px] bg-[#2a9ed8] flex items-center justify-center text-white">STYLE</div>
      </div>
      <StyleSection />
      <PanelHeader title="Outline: Page" className="h-[51px]">
        <div className="flex items-center gap-[20px] -mr-[0px]">
          <svg width="26" height="24" viewBox="0 0 26 24" fill="none">
            <path d="M0 1H24L15 11V22L10 23V11Z" fill="#777" />
            <path d="M20 24V12M15 17L20 12L25 17" stroke="#777" strokeWidth="1.8" />
          </svg>
          <Search />
        </div>
      </PanelHeader>
      <div className="flex-1 flex overflow-hidden bg-[#f4f4f4] text-[22px] text-[#222]">
        <div className="w-[502px] shrink-0 flex flex-col">
          <div className="h-[42px] shrink-0 bg-[#cbe9f5] flex items-center pl-[76px]">
            <div className="w-[32px] h-[20px] bg-white border-2 border-[#555] mr-[12px]" />
            (Rectangle)
          </div>
          {OUTLINE.map((row, i) => (
            <OutlineRow key={i} row={row} />
          ))}
        </div>
        <div className="flex-1 bg-[#fafafa] border-l-2 border-[#e6e6e6] pt-[415px] pl-[6px]">
          <div className="w-[15px] h-[56px] rounded-full bg-[#bdbdbd]" />
        </div>
      </div>
    </div>
  );
}

export default function App() {
  return (
    <div className="relative w-[2554px] h-[1422px] flex flex-col overflow-hidden bg-white [font-family:'Liberation_Sans','Noto_Sans_CJK_SC',sans-serif]">
      <div className="h-[42px] shrink-0 bg-gradient-to-b from-[#ebebeb] to-[#d3d3d3] border-b-2 border-[#b9b9b9] flex items-center justify-center relative">
        <div className="absolute left-[12px] top-[6px] flex gap-[16px]">
          <div className="w-[24px] h-[24px] rounded-full bg-[#fc5b57]" />
          <div className="w-[24px] h-[24px] rounded-full bg-[#fdbb2f]" />
          <div className="w-[24px] h-[24px] rounded-full bg-[#33c748]" />
        </div>
        <span className="text-[27px] text-[#555] -mt-[4px]">Untitled - Axure RP 8 Enterprise Edition : Unlicensed</span>
      </div>
      <Toolbar />
      <div className="h-[2px] bg-[#bdbdbd] shrink-0" />
      <div className="flex-1 flex overflow-hidden">
        <LeftPanel />
        <Canvas />
        <RightPanel />
      </div>
      <div className="absolute left-0 right-0 bottom-0 h-[3px] bg-[#4a4a4a]" />
    </div>
  );
}
